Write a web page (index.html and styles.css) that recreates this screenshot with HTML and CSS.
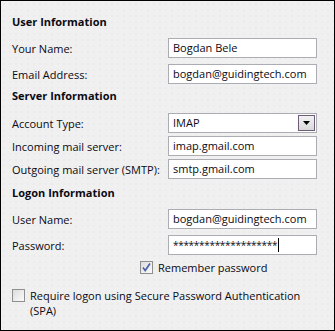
FILE: index.html
```html
<!DOCTYPE html>
<html>
<head>
<meta charset="utf-8">
<link rel="stylesheet" href="styles.css">
</head>
<body>
<div class="panel">
  <div class="section s1">User Information</div>
  <div class="row r-first">
    <span class="label">Your Name:</span>
    <div class="field">Bogdan Bele</div>
  </div>
  <div class="row r-gap">
    <span class="label">Email Address:</span>
    <div class="field">bogdan@guidingtech.com</div>
  </div>

  <div class="section s2">Server Information</div>
  <div class="row r-first2">
    <span class="label">Account Type:</span>
    <div class="field select"><span class="sel-text">IMAP</span>
      <span class="sel-btn"><svg width="9" height="5" viewBox="0 0 9 5"><path d="M1 0h7L4.5 4z" fill="#000"/></svg></span>
    </div>
  </div>
  <div class="row r-tight">
    <span class="label">Incoming mail server:</span>
    <div class="field">imap.gmail.com</div>
  </div>
  <div class="row r-tight">
    <span class="label">Outgoing mail server (SMTP):</span>
    <div class="field">smtp.gmail.com</div>
  </div>

  <div class="section s3">Logon Information</div>
  <div class="row r-first">
    <span class="label">User Name:</span>
    <div class="field">bogdan@guidingtech.com</div>
  </div>
  <div class="row r-gap">
    <span class="label">Password:</span>
    <div class="field pw">********************<span class="caret"></span></div>
  </div>

  <div class="check-row remember">
    <span class="checkbox checked"><svg width="11" height="11" viewBox="0 0 11 11"><path d="M2 5.5l2.2 3L9 1.5" fill="none" stroke="#4a5fa8" stroke-width="1.6"/></svg></span>
    <span class="check-label">Remember password</span>
  </div>

  <div class="check-row spa">
    <span class="checkbox"></span>
    <span class="check-label">Require logon using Secure Password Authentication (SPA)</span>
  </div>
</div>
</body>
</html>
```

FILE: styles.css
```css
html, body {
  margin: 0;
  padding: 0;
}
body {
  width: 335px;
  height: 331px;
  overflow: hidden;
}
.panel {
  box-sizing: border-box;
  width: 335px;
  height: 331px;
  border: 1px solid #000;
  background-color: #f0f0f0;
  background-image: radial-gradient(circle, #e4e4e4 0.6px, transparent 0.8px);
  background-size: 6px 6px;
  padding: 0 17px 0 11px;
  font-family: "Open Sans", "Noto Sans", sans-serif;
  font-size: 11px;
  color: #0a0a14;
}
.section {
  font-weight: bold;
  height: 16px;
  line-height: 16px;
}
.s1 { margin-top: 13px; }
.s2 { margin-top: 4px; }
.s3 { margin-top: 6px; }
.row {
  display: flex;
  align-items: center;
  height: 20px;
}
.r-first { margin-top: 8px; }
.r-first2 { margin-top: 9px; }
.r-gap { margin-top: 6px; }
.r-tight { margin-top: 3px; }
.label {
  width: 156px;
  flex: none;
  white-space: nowrap;
}
.field {
  box-sizing: border-box;
  width: 150px;
  height: 20px;
  border: 1px solid #abadb3;
  background: #fff;
  padding: 0 4px;
  line-height: 18px;
  white-space: nowrap;
  display: flex;
  align-items: center;
}
.select {
  justify-content: space-between;
  padding-right: 1px;
}
.sel-btn {
  box-sizing: border-box;
  width: 17px;
  height: 16px;
  border: 1px solid #6e5d78;
  background: linear-gradient(#f2f2f2, #d9d9d9);
  display: flex;
  align-items: center;
  justify-content: center;
}
.pw {
  font-size: 10px;
  letter-spacing: -0.3px;
}
.caret {
  display: inline-block;
  width: 1px;
  height: 14px;
  background: #000;
  margin-left: 1px;
}
.check-row {
  display: flex;
  align-items: flex-start;
}
.remember {
  margin-top: 5px;
  margin-left: 128px;
}
.spa {
  margin-top: 13px;
}
.checkbox {
  box-sizing: border-box;
  flex: none;
  width: 13px;
  height: 13px;
  border: 1px solid #8e8f8f;
  background: linear-gradient(135deg, #dcdcdc, #fbfbfb);
  margin-top: 1px;
  margin-right: 5px;
  display: flex;
  align-items: center;
  justify-content: center;
}
.check-label {
  line-height: 15px;
}
```
